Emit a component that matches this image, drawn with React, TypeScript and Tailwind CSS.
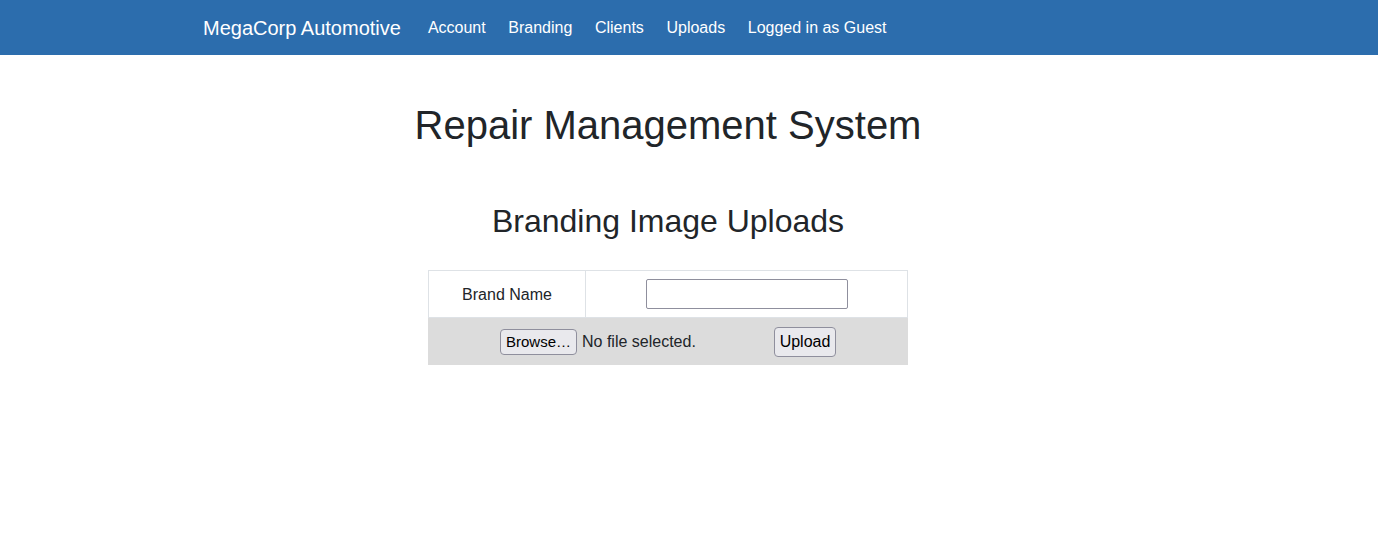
import React from "react";

export default function App() {
  const font = { fontFamily: '"Liberation Sans", Arial, sans-serif' };
  return (
    <div className="min-h-[556px] bg-white text-[#212529]" style={font}>
      <nav className="h-[55px] bg-[#2c6dad]">
        <div className="ml-[188px] flex h-full w-[960px] items-center px-[15px]">
          <span className="text-[20px] leading-[30px] text-white">MegaCorp Automotive</span>
          <ul className="ml-[27px] flex items-center gap-[22.6px] text-[16px] leading-[24px] text-white">
            <li>Account</li>
            <li>Branding</li>
            <li>Clients</li>
            <li>Uploads</li>
            <li>Logged in as Guest</li>
          </ul>
        </div>
      </nav>
      <main className="ml-[188px] w-[960px] px-[15px] text-center">
        <h1 className="mt-[46px] text-[40px] leading-[48px] font-normal">Repair Management System</h1>
        <h2 className="mt-[53px] text-[32px] leading-[38px] font-normal">Branding Image Uploads</h2>
        <div className="mt-[30px] flex justify-center">
          <table className="w-[480px] border-collapse text-[16px] leading-[24px]">
            <tbody>
              <tr>
                <td className="h-[47px] w-[157px] border border-[#dee2e6] px-3 pt-[12px] pb-[10px] align-middle">Brand Name</td>
                <td className="border border-[#dee2e6] px-3 py-[8px] align-middle">
                  <div className="mx-auto h-[30px] w-[202px] rounded-[2px] border border-[#8f8f9d] bg-white" />
                </td>
              </tr>
              <tr className="bg-[#dcdcdc]">
                <td colSpan={2} className="h-[47px] border-x border-[#dcdcdc] px-3 pt-[9px] pb-[8px]">
                  <div className="flex items-center justify-center">
                    <div className="flex w-[268px] items-center">
                      <span className="flex h-[26px] w-[77px] items-center justify-center rounded-[4px] border border-[#8f8f9d] bg-[#e9e9ed] text-[15px] text-black">Browse…</span>
                      <span className="ml-[5px] text-[16px] text-[#212529]">No file selected.</span>
                    </div>
                    <span className="ml-[6px] flex h-[30px] w-[62px] items-center justify-center rounded-[4px] border border-[#8f8f9d] bg-[#e9e9ed] text-[16px] text-black">Upload</span>
                  </div>
                </td>
              </tr>
            </tbody>
          </table>
        </div>
      </main>
    </div>
  );
}
